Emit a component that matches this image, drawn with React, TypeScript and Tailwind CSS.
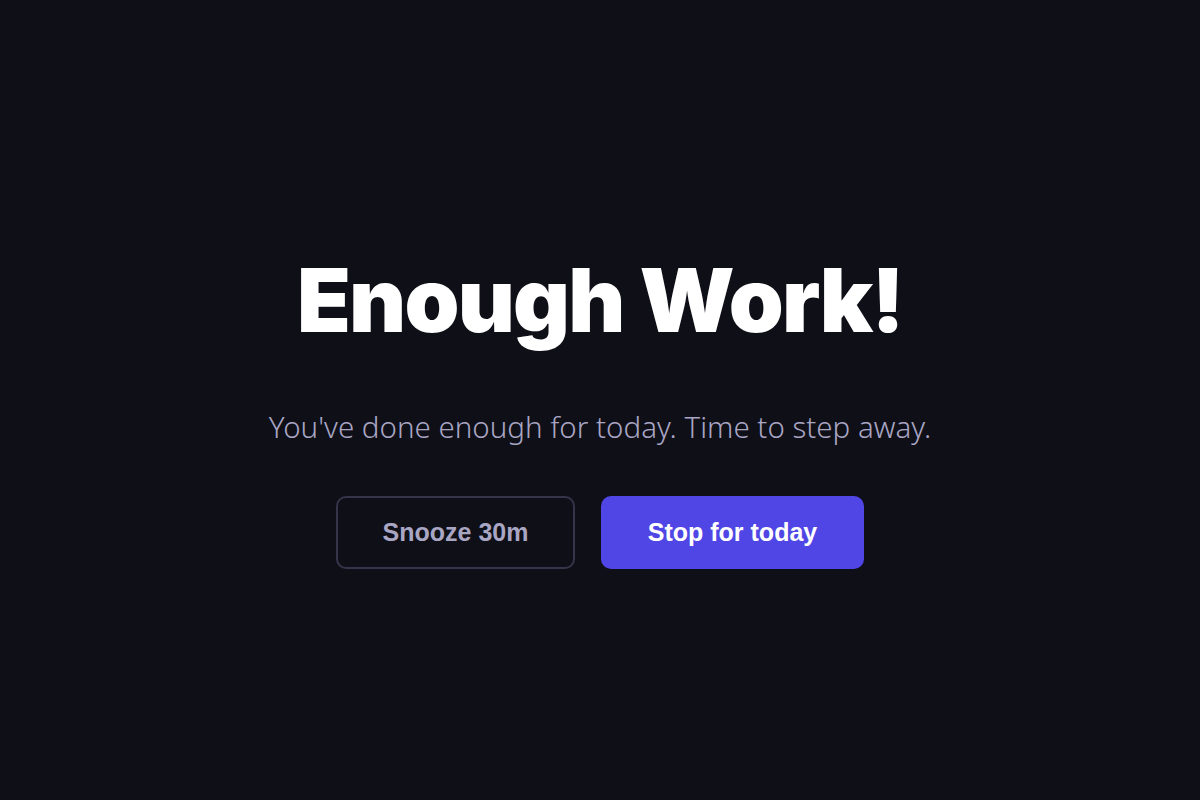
export default function App() {
  return (
    <div className="min-h-screen w-full bg-[#0f0f18] flex flex-col items-center justify-center text-center">
      <h1 className="mt-[25px] text-[88px] leading-none font-black text-white tracking-[-0.02em] font-['Inter',sans-serif]">
        Enough Work!
      </h1>
      <p className="mt-[68px] text-[29.5px] leading-none font-light text-[#a9a6c4] font-['Noto_Sans',sans-serif]">
        You've done enough for today. Time to step away.
      </p>
      <div className="mt-[54px] flex gap-[26px] font-['Liberation_Sans',Arial,sans-serif]">
        <button className="w-[239px] h-[73px] rounded-[10px] border-2 border-[#34344a] text-[25px] font-bold text-[#a9a6c4]">
          Snooze 30m
        </button>
        <button className="w-[263px] h-[73px] rounded-[10px] bg-[#4f46e5] text-[25px] font-bold text-white">
          Stop for today
        </button>
      </div>
    </div>
  );
}
